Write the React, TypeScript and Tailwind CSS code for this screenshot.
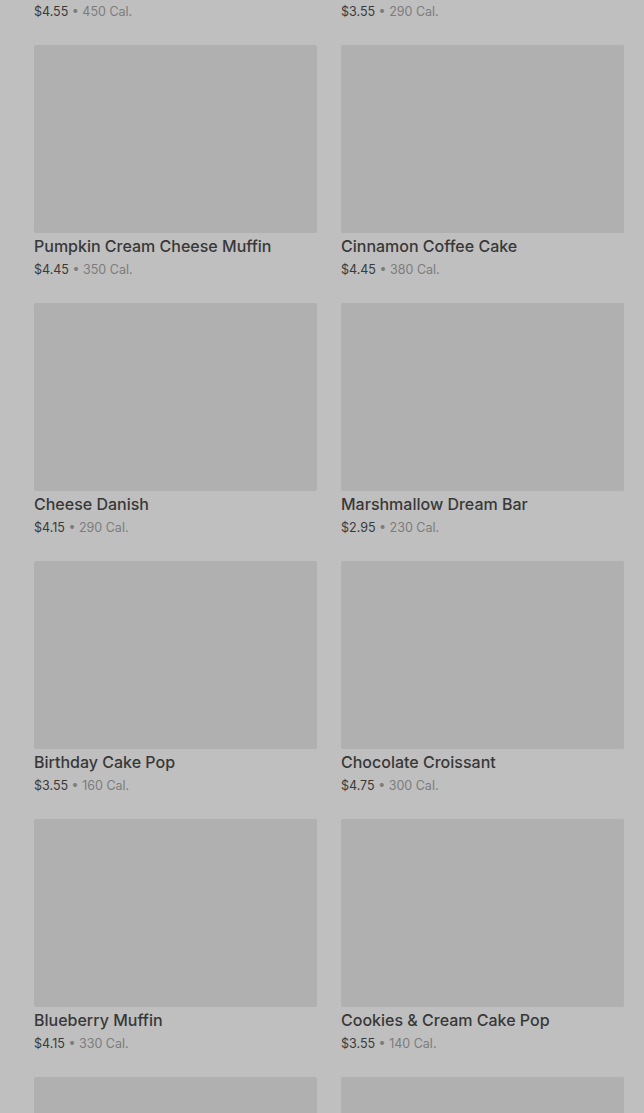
type Item = { name: string; price: string; cal: number };

const items: Item[] = [
  { name: "Banana Nut Bread", price: "$4.55", cal: 450 },
  { name: "Glazed Doughnut", price: "$3.55", cal: 290 },
  { name: "Pumpkin Cream Cheese Muffin", price: "$4.45", cal: 350 },
  { name: "Cinnamon Coffee Cake", price: "$4.45", cal: 380 },
  { name: "Cheese Danish", price: "$4.15", cal: 290 },
  { name: "Marshmallow Dream Bar", price: "$2.95", cal: 230 },
  { name: "Birthday Cake Pop", price: "$3.55", cal: 160 },
  { name: "Chocolate Croissant", price: "$4.75", cal: 300 },
  { name: "Blueberry Muffin", price: "$4.15", cal: 330 },
  { name: "Cookies & Cream Cake Pop", price: "$3.55", cal: 140 },
  { name: "Butter Croissant", price: "$3.75", cal: 260 },
  { name: "Iced Lemon Loaf", price: "$3.95", cal: 470 },
];

function Card({ item }: { item: Item }) {
  return (
    <div className="flex flex-col">
      <div className="h-[188px] w-full rounded-[2px] bg-[#b0b0b0]" />
      <p className="mt-[2px] h-[22px] text-[16px] font-medium leading-[22px] text-[#383838]">
        {item.name}
      </p>
      <p className="mt-[3px] h-[20px] text-[12.5px] leading-[20px] text-[#3a3a3a]">
        {item.price}
        <span className="text-[#7c7c7c]"> • {item.cal} Cal.</span>
      </p>
    </div>
  );
}

export default function App() {
  return (
    <div
      className="h-[1113px] overflow-hidden bg-[#bfbfbf] pl-[34px] pr-[20px]"
      style={{ fontFamily: "Inter, 'Noto Sans', sans-serif" }}
    >
      <div className="-mt-[213px] grid grid-cols-2 gap-x-6 gap-y-[23px]">
        {items.map((item) => (
          <Card key={item.name} item={item} />
        ))}
      </div>
    </div>
  );
}
